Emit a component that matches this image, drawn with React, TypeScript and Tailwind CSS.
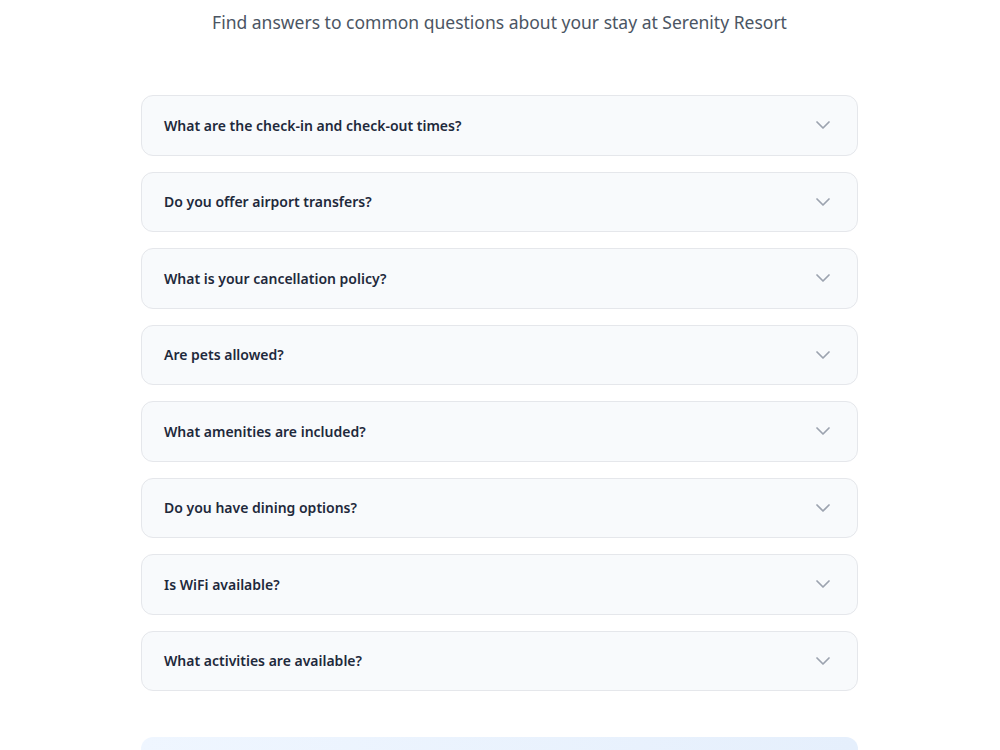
import { ChevronDown } from "lucide-react";

const QUESTIONS = [
  "What are the check-in and check-out times?",
  "Do you offer airport transfers?",
  "What is your cancellation policy?",
  "Are pets allowed?",
  "What amenities are included?",
  "Do you have dining options?",
  "Is WiFi available?",
  "What activities are available?",
];

function FaqItem({ question }: { question: string }) {
  return (
    <button
      type="button"
      className="w-full h-[60.5px] flex items-center justify-between pl-[22px] pr-[22px] rounded-xl border border-[#e5e7eb] bg-[#f8fafc] text-left"
    >
      <span className="text-[14px] font-semibold text-[#1e293b]">{question}</span>
      <ChevronDown className="w-6 h-6 text-[#9ca3af]" strokeWidth={1.75} />
    </button>
  );
}

export default function App() {
  return (
    <div
      className="min-h-screen bg-white"
      style={{ fontFamily: '"Noto Sans", "Open Sans", sans-serif' }}
    >
      <div className="w-[717px] ml-[141px]">
        <p className="pt-[8px] text-center text-[17.5px] leading-[28px] text-[#4b5563]">
          Find answers to common questions about your stay at Serenity Resort
        </p>
        <div className="mt-[59px] flex flex-col gap-4">
          {QUESTIONS.map((q) => (
            <FaqItem key={q} question={q} />
          ))}
        </div>
        <div className="mt-[46px] h-[120px] rounded-xl bg-gradient-to-r from-[#eff6ff] to-[#e5effc]" />
      </div>
    </div>
  );
}
